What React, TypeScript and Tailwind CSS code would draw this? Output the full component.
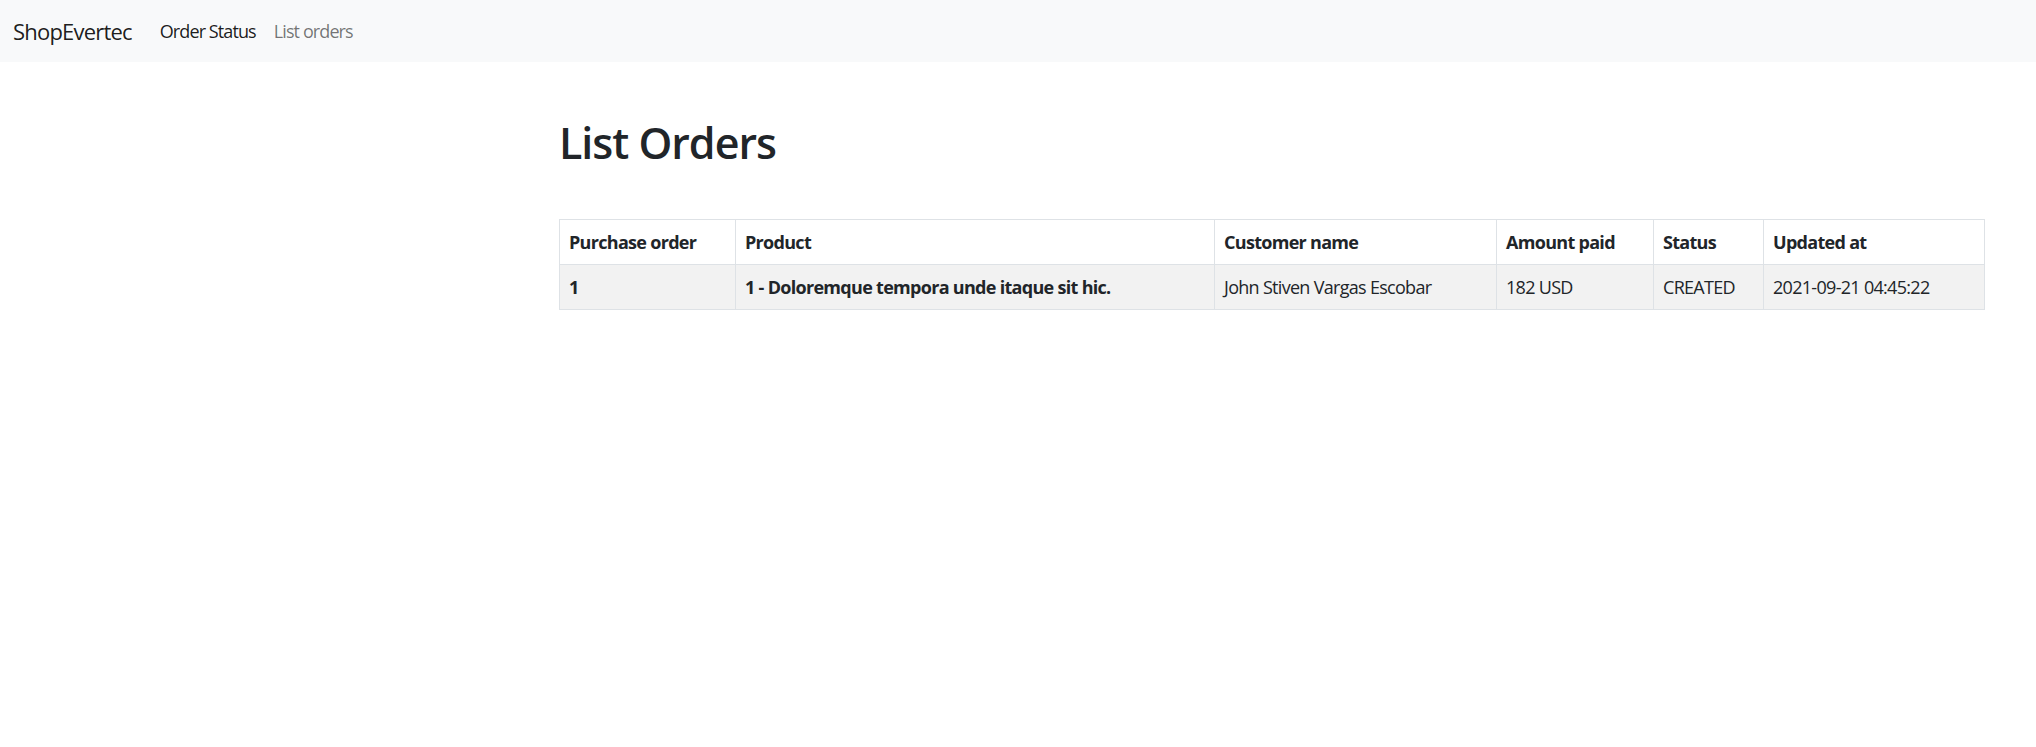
export default function App() {
  const headers = [
    "Purchase order",
    "Product",
    "Customer name",
    "Amount paid",
    "Status",
    "Updated at",
  ];

  return (
    <div className="min-h-screen bg-white text-[#212529] font-['Open_Sans',sans-serif] text-[18px] leading-[27px]">
      {/* Navbar */}
      <nav className="h-[62px] bg-[#f8f9fa] flex items-center px-[13px]">
        <a className="text-[22px] text-black/90 mr-[28px] tracking-[-0.8px]">ShopEvertec</a>
        <a className="text-black/90 mr-[18px] tracking-[-0.9px]">Order Status</a>
        <a className="text-black/55 tracking-[-0.9px]">List orders</a>
      </nav>

      <main className="pl-[559px] pr-[52px]">
        <h1 className="text-[43px] leading-[54px] font-semibold mt-[54px] mb-[49px] tracking-[-1px]">
          List Orders
        </h1>

        <table className="w-[1425px] table-fixed border-collapse border border-[#dee2e6] tracking-[-0.7px] leading-[26px]">
          <colgroup>
            <col className="w-[176px]" />
            <col className="w-[479px]" />
            <col className="w-[282px]" />
            <col className="w-[157px]" />
            <col className="w-[110px]" />
            <col className="w-[221px]" />
          </colgroup>
          <thead>
            <tr>
              {headers.map((h) => (
                <th
                  key={h}
                  className="border border-[#dee2e6] px-[9px] py-[9px] text-left font-bold"
                >
                  {h}
                </th>
              ))}
            </tr>
          </thead>
          <tbody>
            <tr className="bg-[#f2f2f2]">
              <th className="border border-[#dee2e6] px-[9px] py-[9px] text-left font-bold">1</th>
              <td className="border border-[#dee2e6] px-[9px] py-[9px] font-bold">
                1 - Doloremque tempora unde itaque sit hic.
              </td>
              <td className="border border-[#dee2e6] px-[9px] py-[9px]">John Stiven Vargas Escobar</td>
              <td className="border border-[#dee2e6] px-[9px] py-[9px]">182 USD</td>
              <td className="border border-[#dee2e6] px-[9px] py-[9px]">CREATED</td>
              <td className="border border-[#dee2e6] px-[9px] py-[9px]">2021-09-21 04:45:22</td>
            </tr>
          </tbody>
        </table>
      </main>
    </div>
  );
}
